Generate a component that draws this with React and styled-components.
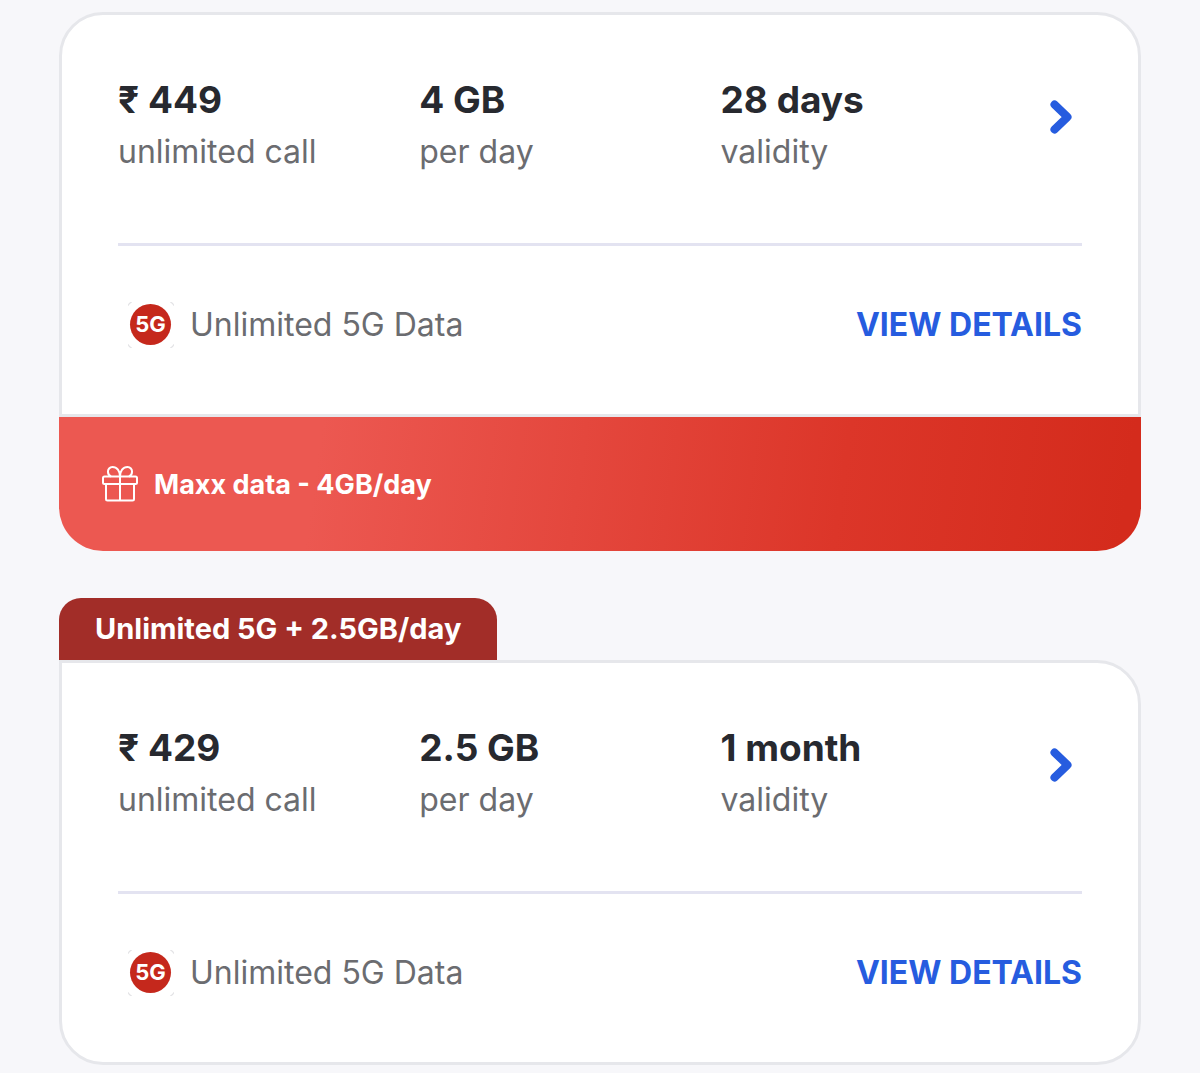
import styled, { createGlobalStyle } from 'styled-components';

const plans = [
  {
    id: 'plan-449',
    price: '₹ 449',
    data: '4 GB',
    validity: '28 days',
    offer: 'Maxx data - 4GB/day',
  },
  {
    id: 'plan-429',
    price: '₹ 429',
    data: '2.5 GB',
    validity: '1 month',
    tag: 'Unlimited 5G + 2.5GB/day',
  },
];

function FiveGBadge() {
  return (
    <Badge viewBox="0 0 46 46" aria-hidden="true">
      <g fill="none" stroke="#d9d9dc" strokeWidth="1">
        <path d="M.5 3.500a3 3 0 0 1 3-3" />
        <path d="M42.500.5a3 3 0 0 1 3 3" />
        <path d="M.5 42.500a3 3 0 0 0 3 3" />
        <path d="M42.500 45.500a3 3 0 0 0 3-3" />
      </g>
      <circle cx="22.500" cy="22.500" r="20.500" fill="#c5281c" />
      <text x="22.500" y="30" textAnchor="middle">
        5G
      </text>
    </Badge>
  );
}

function GiftIcon() {
  return (
    <Gift viewBox="0 0 36 36" aria-hidden="true">
      <rect x="1" y="10.500" width="34" height="7.500" rx="1.500" />
      <path d="M4 18v15a1.500 1.500 0 0 0 1.500 1.500h25A1.500 1.500 0 0 0 32 33V18M18 10.500v24" />
      <path d="M18 10.500C18 5 15 1 10.500 1a4.500 4.500 0 0 0-4.500 5c0 2 1 3.500 3 4.500" />
      <path d="M18 10.500C18 5 21 1 25.500 1a4.500 4.500 0 0 1 4.500 5c0 2-1 3.500-3 4.500" />
    </Gift>
  );
}

function Plan({ plan }) {
  return (
    <Item>
      {plan.tag && <Tag>{plan.tag}</Tag>}

      <Card $tagged={Boolean(plan.tag)} $offer={Boolean(plan.offer)}>
        <Summary>
          <Fact>
            <Value>{plan.price}</Value>
            <Label>unlimited call</Label>
          </Fact>

          <Fact>
            <Value>{plan.data}</Value>
            <Label>per day</Label>
          </Fact>

          <Fact>
            <Value>{plan.validity}</Value>
            <Label>validity</Label>
          </Fact>

          <OpenButton type="button" aria-label={`Open ${plan.price} plan`}>
            <svg width="22" height="34" viewBox="0 0 22 34" aria-hidden="true">
              <path d="M4.500 4.500L17.500 17 4.500 29.500" />
            </svg>
          </OpenButton>
        </Summary>

        <Benefits>
          <FiveGBadge />
          <Label>Unlimited 5G Data</Label>
          <DetailsButton type="button">VIEW DETAILS</DetailsButton>
        </Benefits>
      </Card>

      {plan.offer && (
        <Offer>
          <GiftIcon />
          {plan.offer}
        </Offer>
      )}
    </Item>
  );
}

function App() {
  return (
    <>
      <GlobalStyle />
      <List>
        {plans.map((plan) => (
          <Plan key={plan.id} plan={plan} />
        ))}
      </List>
    </>
  );
}

export default App;

const GlobalStyle = createGlobalStyle`
  *,
  *::before,
  *::after {
    box-sizing: border-box;
  }

  body {
    margin: 0;
    background: #f7f7fa;
    font-family: Inter, 'Noto Sans', sans-serif;
    color: #27292f;
  }

  button {
    padding: 0;
    border: 0;
    background: none;
    font: inherit;
    cursor: pointer;
  }
`;

const List = styled.main`
  display: flex;
  flex-direction: column;
  gap: 47px;
  padding: 12px 59px 9px;
`;

const Item = styled.article`
  display: flex;
  flex-direction: column;
`;

const Tag = styled.div`
  align-self: flex-start;
  padding: 0 36px;
  border-radius: 22px 22px 0 0;
  background: #a22d28;
  color: #fff;
  font-size: 29px;
  font-weight: 700;
  line-height: 62px;
`;

const Card = styled.section`
  padding: 59px 56px 0;
  border: 3px solid #e6e7eb;
  border-radius: ${({ $tagged }) => ($tagged ? '0' : '44px')} 44px
    ${({ $offer }) => ($offer ? '0 0' : '44px 44px')};
  background: #fff;
`;

const Summary = styled.div`
  display: grid;
  grid-template-columns: 5fr 5fr 5fr 1fr;
  padding-bottom: 65px;
  border-bottom: 3px solid #e3e3f1;
`;

const Fact = styled.div`
  line-height: 52px;
`;

const Value = styled.div`
  font-size: 37px;
  font-weight: 700;
`;

const Label = styled.div`
  color: #6b6c70;
  font-size: 32px;
`;

const OpenButton = styled.button`
  display: flex;
  align-items: center;
  justify-content: center;
  justify-self: end;
  width: 42px;
  height: 86px;

  path {
    fill: none;
    stroke: #265cdf;
    stroke-width: 8;
    stroke-linecap: round;
    stroke-linejoin: round;
  }
`;

const Benefits = styled.div`
  display: flex;
  align-items: center;
  gap: 16px;
  padding: 53px 0 63px 10px;
  line-height: 52px;
`;

const Badge = styled.svg`
  flex: none;
  width: 46px;
  height: 46px;

  text {
    fill: #fff;
    font-size: 22px;
    font-weight: 700;
  }
`;

const DetailsButton = styled.button`
  margin-left: auto;
  color: #265cdf;
  font-size: 32px;
  font-weight: 700;
`;

const Offer = styled.div`
  display: flex;
  align-items: center;
  gap: 16px;
  height: 134px;
  padding: 0 43px;
  border-radius: 0 0 44px 44px;
  background: linear-gradient(98deg, #ec5851 24%, #dc3629 72%, #d42b1c 98%);
  color: #fff;
  font-size: 27px;
  font-weight: 700;
`;

const Gift = styled.svg`
  flex: none;
  width: 36px;
  height: 36px;
  fill: none;
  stroke: #fff;
  stroke-width: 2;
  stroke-linejoin: round;
`;
